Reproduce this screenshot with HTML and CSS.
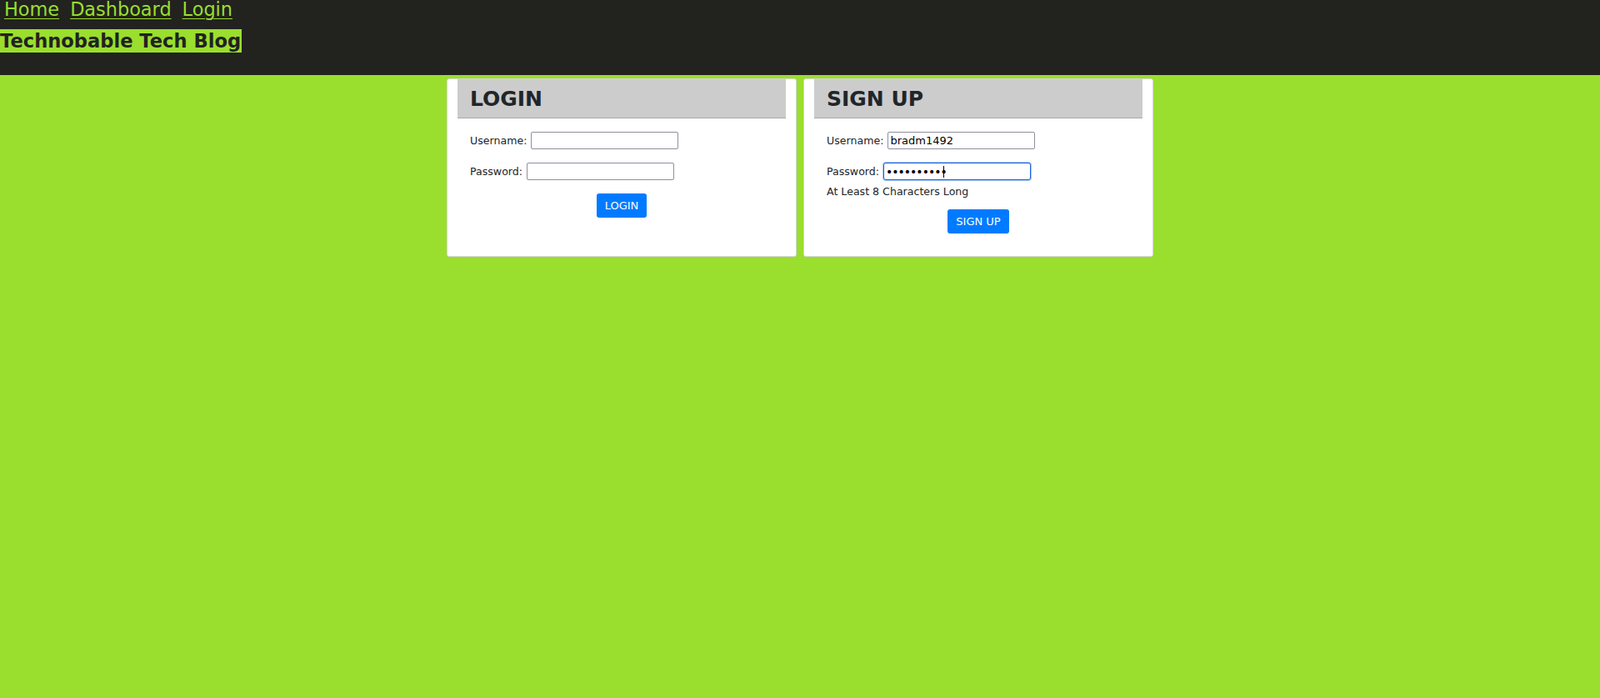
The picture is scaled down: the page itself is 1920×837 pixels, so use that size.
FILE: index.html
```html
<!DOCTYPE html>
<html lang="en">
<head>
<meta charset="utf-8">
<title>Technobable Tech Blog</title>
<link rel="stylesheet" href="styles.css">
</head>
<body>
<header class="site-header">
  <nav class="nav">
    <a href="#" class="nav-link">Home</a>
    <a href="#" class="nav-link">Dashboard</a>
    <a href="#" class="nav-link">Login</a>
  </nav>
  <h1 class="site-title">Technobable Tech Blog</h1>
</header>
<main class="main">
  <section class="card">
    <div class="card-header"><h2 class="card-title">LOGIN</h2></div>
    <form class="card-form">
      <div class="field">
        <label class="field-label" for="login-user">Username:</label>
        <input class="field-input" id="login-user" type="text">
      </div>
      <div class="field">
        <label class="field-label" for="login-pass">Password:</label>
        <input class="field-input" id="login-pass" type="password">
      </div>
      <button type="button" class="btn">LOGIN</button>
    </form>
  </section>
  <section class="card">
    <div class="card-header"><h2 class="card-title">SIGN UP</h2></div>
    <form class="card-form">
      <div class="field">
        <label class="field-label" for="signup-user">Username:</label>
        <input class="field-input" id="signup-user" type="text" value="bradm1492">
      </div>
      <div class="field">
        <label class="field-label" for="signup-pass">Password:</label>
        <span class="input-wrap">
          <input class="field-input field-password is-focused" id="signup-pass" type="password" value="abcdefghij">
          <span class="caret"></span>
        </span>
      </div>
      <div class="field-help">At Least 8 Characters Long</div>
      <button type="button" class="btn btn-after-help">SIGN UP</button>
    </form>
  </section>
</main>
</body>
</html>
```
FILE: styles.css
```css
html, body {
  margin: 0;
  padding: 0;
}
body {
  background: #9ade2e;
  font-family: "DejaVu Sans", Verdana, sans-serif;
  color: #212529;
  min-height: 837px;
}
.site-header {
  background: #22221f;
  height: 90px;
  box-sizing: border-box;
}
.nav {
  display: flex;
  gap: 13px;
  padding-left: 5px;
  font-size: 22.4px;
  line-height: 25px;
  position: relative;
  top: -1px;
}
.nav-link {
  color: #9ade2e;
  text-decoration: underline;
  text-underline-offset: 3px;
  text-decoration-thickness: 1px;
}
.site-title {
  display: inline-block;
  margin: 10px 0 0 0;
  background: #9ade2e;
  color: #22221f;
  font-size: 22.6px;
  font-weight: bold;
  line-height: 28px;
  padding: 0 1px 0 0;
}
.main {
  display: flex;
  justify-content: center;
  align-items: stretch;
  gap: 8px;
  margin-top: 4px;
}
.card {
  width: 420px;
  box-sizing: border-box;
  background: #fff;
  border: 1px solid #d6d6d6;
  border-radius: 3px;
  padding: 0 12px 27px 12px;
}
.card-header {
  background: #cccccc;
  border-bottom: 1px solid #a9a9a9;
  padding: 10px 15px 8px 15px;
}
.card-title {
  margin: 0;
  font-size: 25px;
  line-height: 28px;
  font-weight: bold;
  color: #212529;
}
.card-form {
  padding: 0 15px;
  font-size: 12.6px;
  line-height: 15px;
}
.field {
  display: flex;
  align-items: center;
  margin-top: 16px;
}
.field-label {
  margin-right: 5px;
}
.input-wrap {
  position: relative;
  display: inline-flex;
}
.field-input {
  width: 171px;
  height: 17px;
  padding: 1px 2px;
  border: 1px solid #8f8f9d;
  border-radius: 2px;
  font-family: "DejaVu Sans", Verdana, sans-serif;
  font-size: 13px;
  color: #000;
  background: #fff;
  outline: none;
}
.field-password {
  font-size: 14px;
  letter-spacing: -1px;
}
.field-input.is-focused {
  border-color: #1a62d8;
  box-shadow: 0 0 0 1px #a8c6f2;
  border-radius: 3px;
}
.caret {
  position: absolute;
  left: 72px;
  top: 4px;
  width: 1px;
  height: 14px;
  background: #000;
}
.field-help {
  margin-top: 6px;
}
.btn {
  display: block;
  margin: 16px auto 0 auto;
  background: #007bff;
  color: #fff;
  border: none;
  border-radius: 3px;
  font-family: "DejaVu Sans", Verdana, sans-serif;
  font-size: 13px;
  line-height: 15px;
  padding: 7px 10px;
}
.btn-after-help {
  margin-top: 14px;
}
```
